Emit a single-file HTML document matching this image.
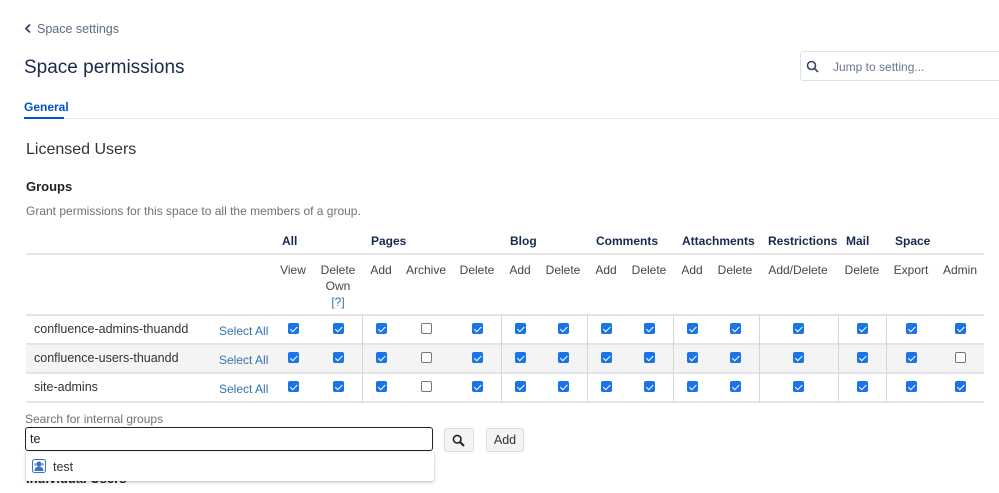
<!DOCTYPE html>
<html><head><meta charset="utf-8"><style>
body{margin:0;width:999px;height:493px;overflow:hidden;background:#fff;font-family:"Liberation Sans",sans-serif;position:relative;color:#333}
.a{position:absolute;white-space:nowrap}
.h{font-weight:bold;font-size:12px;color:#172b4d}
.s{font-size:12px;color:#444;text-align:center;transform:translateX(-50%);line-height:16px}
.cb,.cu{position:absolute;width:11px;height:11px;border-radius:2px;box-sizing:border-box}
.cb{background:#1a73e8}
.cb::after{content:"";position:absolute;left:3.5px;top:1.5px;width:3px;height:5.5px;border:solid #fff;border-width:0 1.6px 1.6px 0;transform:rotate(45deg)}
.cu{border:1px solid #767676;background:#fff}
.hl{position:absolute;left:26px;width:958px;height:2px;background:#e4e4e4}
.vl{position:absolute;top:315px;height:88px;width:1px;background:#d6d6d6}
</style></head><body>
<svg class="a" style="left:24px;top:23px" width="8" height="11" viewBox="0 0 8 11"><path d="M6 1.5L2 5.5L6 9.5" stroke="#344563" stroke-width="1.8" fill="none"/></svg>
<div class="a" style="left:37px;top:22px;font-size:12.5px;color:#5e6c84">Space settings</div>
<div class="a" style="left:24px;top:57px;font-size:19px;color:#172b4d">Space permissions</div>
<div class="a" style="left:800px;top:51px;width:205px;height:30px;border:1px solid #dfe1e6;border-radius:3px;box-sizing:border-box"></div>
<svg class="a" style="left:806px;top:60px" width="13" height="13" viewBox="0 0 13 13"><circle cx="5.5" cy="5.5" r="4" stroke="#344563" stroke-width="1.6" fill="none"/><path d="M8.5 8.5L12 12" stroke="#344563" stroke-width="1.6"/></svg>
<div class="a" style="left:833px;top:60px;font-size:12px;color:#6b778c">Jump to setting...</div>
<div class="a" style="left:24px;top:100px;font-size:12px;font-weight:bold;color:#0052cc">General</div>
<div class="a" style="left:24px;top:117px;width:40px;height:2px;background:#0052cc"></div>
<div class="a" style="left:64px;top:118px;width:935px;height:1px;background:#ebecf0"></div>
<div class="a" style="left:26px;top:141px;font-size:16px;color:#333">Licensed Users</div>
<div class="a" style="left:26px;top:179px;font-size:13px;font-weight:bold;color:#222">Groups</div>
<div class="a" style="left:26px;top:204px;font-size:12px;color:#707070">Grant permissions for this space to all the members of a group.</div>

<div class="a h" style="left:282px;top:234px">All</div>
<div class="a h" style="left:371px;top:234px">Pages</div>
<div class="a h" style="left:510px;top:234px">Blog</div>
<div class="a h" style="left:596px;top:234px">Comments</div>
<div class="a h" style="left:682px;top:234px">Attachments</div>
<div class="a h" style="left:768px;top:234px">Restrictions</div>
<div class="a h" style="left:846px;top:234px">Mail</div>
<div class="a h" style="left:895px;top:234px">Space</div>
<div class="hl" style="top:253px"></div>

<div class="a s" style="left:293px;top:262px">View</div>
<div class="a s" style="left:338px;top:262px">Delete<br>Own<br><span style="color:#3572b0">[?]</span></div>
<div class="a s" style="left:381px;top:262px">Add</div>
<div class="a s" style="left:426px;top:262px">Archive</div>
<div class="a s" style="left:477px;top:262px">Delete</div>
<div class="a s" style="left:520px;top:262px">Add</div>
<div class="a s" style="left:563px;top:262px">Delete</div>
<div class="a s" style="left:606px;top:262px">Add</div>
<div class="a s" style="left:649px;top:262px">Delete</div>
<div class="a s" style="left:692px;top:262px">Add</div>
<div class="a s" style="left:735px;top:262px">Delete</div>
<div class="a s" style="left:798px;top:262px">Add/Delete</div>
<div class="a s" style="left:862px;top:262px">Delete</div>
<div class="a s" style="left:911px;top:262px">Export</div>
<div class="a s" style="left:960px;top:262px">Admin</div>

<div class="hl" style="top:314px"></div>
<div class="a" style="left:26px;top:344px;width:958px;height:29px;background:#f4f4f4"></div>
<div class="hl" style="top:343px"></div>
<div class="hl" style="top:372px"></div>
<div class="hl" style="top:401px"></div>
<div class="vl" style="left:362px"></div><div class="vl" style="left:501px"></div><div class="vl" style="left:587px"></div><div class="vl" style="left:673px"></div><div class="vl" style="left:759px"></div><div class="vl" style="left:838px"></div><div class="vl" style="left:886px"></div>

<div class="a" style="left:34px;top:322px;font-size:12.5px;color:#333">confluence-admins-thuandd</div>
<div class="a" style="left:34px;top:351px;font-size:12.5px;color:#333">confluence-users-thuandd</div>
<div class="a" style="left:34px;top:380px;font-size:12.5px;color:#333">site-admins</div>
<div class="a" style="left:219px;top:324px;font-size:12px;color:#3572b0">Select All</div>
<div class="a" style="left:219px;top:353px;font-size:12px;color:#3572b0">Select All</div>
<div class="a" style="left:219px;top:382px;font-size:12px;color:#3572b0">Select All</div>

<span class="cb" style="left:288px;top:323px"></span><span class="cb" style="left:333px;top:323px"></span><span class="cb" style="left:376px;top:323px"></span><span class="cu" style="left:421px;top:323px"></span><span class="cb" style="left:472px;top:323px"></span><span class="cb" style="left:515px;top:323px"></span><span class="cb" style="left:558px;top:323px"></span><span class="cb" style="left:601px;top:323px"></span><span class="cb" style="left:644px;top:323px"></span><span class="cb" style="left:687px;top:323px"></span><span class="cb" style="left:730px;top:323px"></span><span class="cb" style="left:793px;top:323px"></span><span class="cb" style="left:857px;top:323px"></span><span class="cb" style="left:906px;top:323px"></span><span class="cb" style="left:955px;top:323px"></span>
<span class="cb" style="left:288px;top:352px"></span><span class="cb" style="left:333px;top:352px"></span><span class="cb" style="left:376px;top:352px"></span><span class="cu" style="left:421px;top:352px"></span><span class="cb" style="left:472px;top:352px"></span><span class="cb" style="left:515px;top:352px"></span><span class="cb" style="left:558px;top:352px"></span><span class="cb" style="left:601px;top:352px"></span><span class="cb" style="left:644px;top:352px"></span><span class="cb" style="left:687px;top:352px"></span><span class="cb" style="left:730px;top:352px"></span><span class="cb" style="left:793px;top:352px"></span><span class="cb" style="left:857px;top:352px"></span><span class="cb" style="left:906px;top:352px"></span><span class="cu" style="left:955px;top:352px"></span>
<span class="cb" style="left:288px;top:381px"></span><span class="cb" style="left:333px;top:381px"></span><span class="cb" style="left:376px;top:381px"></span><span class="cu" style="left:421px;top:381px"></span><span class="cb" style="left:472px;top:381px"></span><span class="cb" style="left:515px;top:381px"></span><span class="cb" style="left:558px;top:381px"></span><span class="cb" style="left:601px;top:381px"></span><span class="cb" style="left:644px;top:381px"></span><span class="cb" style="left:687px;top:381px"></span><span class="cb" style="left:730px;top:381px"></span><span class="cb" style="left:793px;top:381px"></span><span class="cb" style="left:857px;top:381px"></span><span class="cb" style="left:906px;top:381px"></span><span class="cb" style="left:955px;top:381px"></span>

<div class="a" style="left:25px;top:412px;font-size:12px;color:#707070">Search for internal groups</div>
<div class="a" style="left:25px;top:427px;width:408px;height:24px;border:1px solid #222;border-radius:3px;box-sizing:border-box"></div>
<div class="a" style="left:30px;top:432px;font-size:12.5px;color:#222">te</div>
<div class="a" style="left:444px;top:428px;width:30px;height:24px;background:#f4f4f4;border:1px solid #ddd;border-radius:3px;box-sizing:border-box"></div>
<svg class="a" style="left:452px;top:434px" width="13" height="13" viewBox="0 0 13 13"><circle cx="5.2" cy="5.2" r="3.8" stroke="#222" stroke-width="1.6" fill="none"/><path d="M8 8L12 12" stroke="#222" stroke-width="2"/></svg>
<div class="a" style="left:486px;top:428px;width:38px;height:24px;background:#f4f4f4;border:1px solid #ddd;border-radius:3px;box-sizing:border-box;font-size:12.5px;color:#333;text-align:center;line-height:22px">Add</div>
<div class="a" style="left:26px;top:471px;font-size:13px;font-weight:bold;color:#222">Individual Users</div>
<div class="a" style="left:26px;top:452px;width:408px;height:29px;background:#fff;box-shadow:0 1px 3px rgba(0,0,0,.3);border-radius:2px"></div>
<svg class="a" style="left:32px;top:459px" width="14" height="14" viewBox="0 0 14 14"><rect x="0.5" y="0.5" width="13" height="13" rx="2" fill="#fff" stroke="#3b73c4"/><circle cx="7" cy="5" r="2.5" fill="#3b73c4"/><path d="M2.5 12c0-3 2-4.5 4.5-4.5s4.5 1.5 4.5 4.5z" fill="#3b73c4"/><circle cx="3.5" cy="5.5" r="1.5" fill="#8fb0e0"/><circle cx="10.5" cy="5.5" r="1.5" fill="#8fb0e0"/></svg>
<div class="a" style="left:53px;top:460px;font-size:12.5px;color:#333">test</div>
</body></html>
